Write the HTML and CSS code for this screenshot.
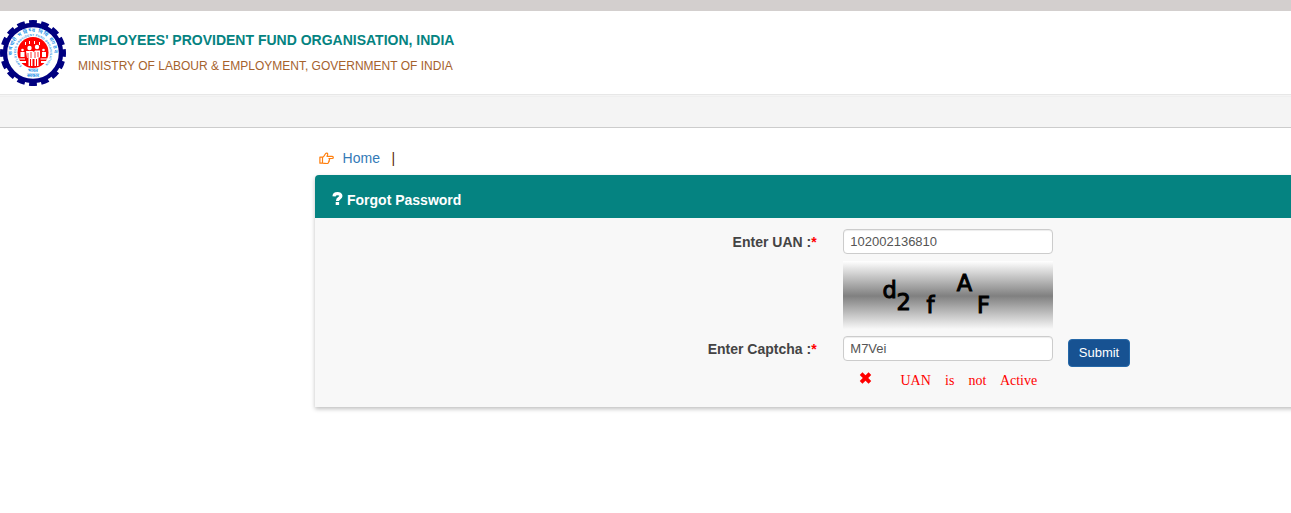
FILE: index.html
```html
<!DOCTYPE html>
<html lang="en">
<head>
<meta charset="utf-8">
<title>Forgot Password</title>
<link rel="stylesheet" href="styles.css">
</head>
<body>
<header class="masthead">
  <svg class="logo" viewBox="0 0 66 66" role="img" aria-label="EPFO">
    <circle class="gear-teeth" cx="33" cy="33" r="30" pathLength="160"/>
    <circle class="gear-ring" cx="33" cy="33" r="28"/>
    <circle class="seal" cx="33" cy="32.500" r="15.500"/>
    <path id="arc-outer" class="guide" d="M12.700 38.200A21 21 0 1 1 53.300 38.200"/>
    <path id="arc-inner" class="guide" d="M22.600 46.500A17 17 0 1 1 43.400 46.500"/>
    <text class="ring-text hindi"><textPath href="#arc-outer" startOffset="3" textLength="68">कर्मचारी भविष्य निधि संगठन</textPath></text>
    <text class="ring-text"><textPath href="#arc-inner" startOffset="1" textLength="80">EMPLOYEES PROVIDENT FUND ORGANISATION</textPath></text>
    <g class="people">
      <circle cx="29.500" cy="28" r="2.200"/><circle cx="37" cy="27" r="2.200"/>
      <circle cx="22.500" cy="30" r="1.300"/><circle cx="43.500" cy="30" r="1.300"/>
      <path d="M26 31h6.500l1.500 1 1-1.500h5v7h-1.500v8.500h-1.500v-7h-1v7h-1.500v-7h-2v7h-1.500v-7h-1v7h-1.500v-8h-1.500zM20.500 32h4v5h-4zM42 32h4v5h-4zM18.500 38.500h6.500v1h-6.500zM40.500 38.500h7v1h-7zM20 41h6v2h-6zM41 41h5v2h-5zM25 22h1v3h-1zM29 21h1v3h-1zM34 21h1v3h-1zM39 22h1v3h-1z"/>
      <path class="seam" d="M28 33v5M31 32v6M35 32v6M38 32v5"/>
    </g>
    <text class="ring-text base" x="33" y="52" text-anchor="middle">भारत</text>
    <text class="ring-text base" x="33" y="57" text-anchor="middle">सरकार</text>
  </svg>
  <div class="titles">
    <div class="org">EMPLOYEES' PROVIDENT FUND ORGANISATION, INDIA</div>
    <div class="ministry">MINISTRY OF LABOUR &amp; EMPLOYMENT, GOVERNMENT OF INDIA</div>
  </div>
</header>
<div class="navbar"></div>
<main class="content">
  <nav class="crumbs">
    <svg class="hand" viewBox="0 0 15 13">
      <path d="M.9 5.200h2.600v6H.9zM3.500 5.200C5 5 5.400 3 6.600 1.600 7.400.7 9 1.100 8.700 2.500c-.1.700-.6 1.200-.7 1.900h5.200c1.500 0 1.500 2.100 0 2.100H9.900c.9.300.9 1.400.1 1.800.5.600.3 1.400-.5 1.600.1.900-.5 1.600-1.500 1.600-1.700 0-2.900-.3-4.500-.3"/>
    </svg>
    <a class="home" href="#">Home</a><span class="sep">|</span>
  </nav>
  <section class="panel">
    <h1 class="panel-head">
      <svg class="question" viewBox="0 0 11 14"><path class="hook" d="M2 4.300C2.200.9 8.900.7 8.900 4.100 8.900 6.400 5.600 6 5.500 9"/><path class="dot" d="M3.700 10h3.400v3H3.700z"/></svg>
      <span>Forgot Password</span>
    </h1>
    <form class="panel-body">
      <label class="label" for="uan">Enter UAN :<span class="req">*</span></label>
      <input class="field" id="uan" type="text" value="102002136810">
      <svg class="captcha" viewBox="0 0 210 68">
        <text x="39.500" y="36.500">d</text><text x="53.500" y="49">2</text><text x="83.500" y="52">f</text><text x="113.700" y="30">A</text><text x="134" y="52">F</text>
      </svg>
      <label class="label captcha-label" for="captcha">Enter Captcha :<span class="req">*</span></label>
      <input class="field captcha-field" id="captcha" type="text" value="M7Vei">
      <button class="submit" type="button">Submit</button>
      <div class="error">
        <svg class="cross" viewBox="0 0 12 12"><path d="M1.600 1.600l8.800 8.800M10.400 1.600l-8.800 8.800"/></svg>
        <span class="message">UAN is not Active</span>
      </div>
    </form>
  </section>
</main>
</body>
</html>
```

FILE: styles.css
```css
* { box-sizing: border-box; }
body {
  min-height: 100vh;
  margin: 0;
  border-top: 11px solid #d3cfce;
  background: #fff;
  overflow: hidden;
  font: 14px/20px "Liberation Sans", Arial, sans-serif;
}
.masthead { display: flex; height: 83px; padding-top: 9px; }
.logo { width: 66px; height: 66px; flex: none; }
.gear-teeth { fill: none; stroke: #000080; stroke-width: 6; stroke-dasharray: 6.4 3.6; stroke-dashoffset: 3.2; }
.gear-ring { fill: #fff; stroke: #000080; stroke-width: 4.4; }
.seal { fill: #f00; }
.guide { fill: none; }
.ring-text { fill: #2492e8; font: bold 3px "Liberation Sans", sans-serif; }
.hindi { font-size: 5px; }
.base { font-size: 5px; }
.people { fill: #fff; }
.seam { fill: none; stroke: #f00; stroke-width: .8; }
.titles { padding: 10px 0 0 12px; white-space: nowrap; }
.org { color: #058381; font-weight: bold; }
.ministry { margin-top: 6px; color: #a5622d; font-size: 12px; }
.navbar {
  height: 34px;
  border-top: 1px solid #e7e7e7;
  border-bottom: 1px solid #ccc;
  background: #f4f4f4;
  box-shadow: inset 0 2px 0 -1px #f4f4f4, inset 0 3px 0 -1px #efefef;
}
.content { margin-left: 315px; padding-top: 20px; }
.crumbs { display: flex; height: 27px; padding-left: 4px; }
.hand { width: 15px; height: 13px; margin-top: 4px; fill: none; stroke: #ff7f0e; stroke-width: 1.2; stroke-linejoin: round; }
.home { margin-left: 8.6px; color: #337ab7; text-decoration: none; }
.sep { margin-left: 11.6px; color: #5c2705; }
.panel {
  height: 232px;
  margin-right: -20px;
  border-radius: 4px 4px 0 0;
  background: #f8f8f8;
  box-shadow: 0 2px 4px rgba(0,0,0,.25);
}
.panel-head {
  display: flex;
  gap: 4px;
  height: 43px;
  margin: 0;
  padding: 15px 0 0 17px;
  border-radius: 4px 0 0 0;
  background: #058381;
  color: #fff;
  font-size: 14px;
  line-height: 20px;
}
.question { width: 11px; height: 14px; margin-top: 2px; }
.hook { fill: none; stroke: #fff; stroke-width: 3.2; }
.dot { fill: #fff; }
.panel-body {
  display: grid;
  grid-template-columns: 502px 236px 103px;
  grid-template-rows: 25px 68px 25px 20px;
  row-gap: 7px;
  padding-top: 11px;
}
.label { grid-column: 1; padding: 3px .4px 0 0; text-align: right; color: #444; font-weight: bold; white-space: nowrap; }
.req { color: #f00; }
.field {
  grid-column: 2;
  width: 210px;
  height: 25px;
  margin-left: 26px;
  padding: 0 6px 0 6.3px;
  border: 1px solid #ccc;
  border-radius: 4px;
  background: #fff;
  box-shadow: inset 0 1px 1px rgba(0,0,0,.075);
  color: #555;
  font: 13px/20px "Liberation Sans", Arial, sans-serif;
}
.captcha {
  grid-column: 2;
  width: 210px;
  height: 68px;
  margin-left: 26px;
  background: linear-gradient(#fff 0, #808080 35px, #fff 70px);
  font: 22.5px "DejaVu Sans", sans-serif;
  stroke: #000;
  stroke-width: 1;
}
.submit {
  grid-column: 3;
  width: 62px;
  height: 28px;
  margin: 3px 0 0 15px;
  padding: 0;
  border: 1px solid #2568a8;
  border-radius: 4px;
  background: #175292;
  color: #fff;
  font: 13px/18px "Liberation Sans", Arial, sans-serif;
}
.error { grid-column: 2; display: flex; padding-left: 42px; color: #f00; }
.cross { width: 13px; height: 12px; flex: none; margin: 4px 0 0; fill: none; stroke: #f00; stroke-width: 3.8; }
.message { margin: 3px 0 0 28.5px; font: 14px/20px "Liberation Serif", serif; word-spacing: 10.7px; white-space: nowrap; }
```
